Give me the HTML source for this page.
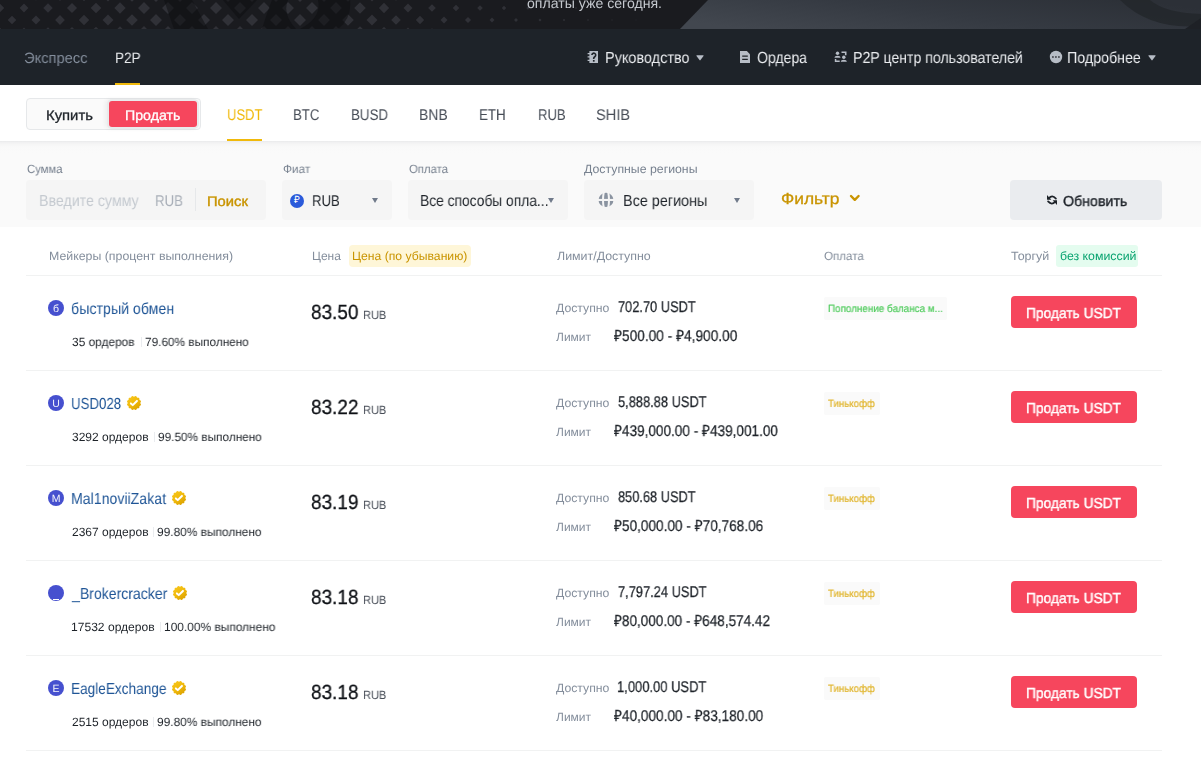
<!DOCTYPE html>
<html><head><meta charset="utf-8">
<style>
html,body{margin:0;padding:0;}
body{width:1201px;height:763px;overflow:hidden;position:relative;background:#fff;font-family:"Liberation Sans",sans-serif;text-rendering:geometricPrecision;}
.t{position:absolute;white-space:nowrap;transform-origin:0 50%;will-change:transform;}
.abs{position:absolute;}
#banner{position:absolute;left:0;top:0;width:1201px;height:29px;background:#1A1B1F;overflow:hidden;}
#nav{position:absolute;left:0;top:29px;width:1201px;height:56px;background:#1E2329;}
.ul{position:absolute;height:2px;background:#F0B90B;}
#filt{position:absolute;left:0;top:141px;width:1201px;height:86px;background:linear-gradient(#E9EAEB 0px,#F1F1F2 1.5px,#F6F6F6 3.5px,#F9F9F9 6px,#FAFAFA 12px,#FAFAFA 100%);}
.box{position:absolute;background:#F5F5F5;border-radius:4px;height:40px;top:180px;}
.caret{position:absolute;width:0;height:0;border-left:3.5px solid transparent;border-right:3.5px solid transparent;border-top:5px solid #707A8A;}
.av{position:absolute;left:48px;width:16px;height:16px;border-radius:50%;background:#4650CF;color:#F4F5FB;font-size:10.5px;line-height:19px;text-align:center;will-change:transform;}
.avu{position:absolute;left:53px;width:6px;height:1px;background:#fff;}
.badge{position:absolute;}
.odiv{position:absolute;width:1px;height:10px;background:#EAECEF;}
.tag{position:absolute;left:824px;height:23px;background:#FAFAFA;border-radius:2px;}
.sell{position:absolute;left:1011px;width:126px;height:32px;background:#F6465D;border-radius:4px;}
.rline{position:absolute;left:26px;width:1136px;height:1px;background:#F1F2F2;}
</style></head><body>
<svg width="0" height="0" style="position:absolute">
<defs>
<symbol id="vb" viewBox="0 0 24 24">
<linearGradient id="bgr" x1="0.2" y1="0.1" x2="0.8" y2="0.9"><stop offset="0" stop-color="#F6C419"/><stop offset="0.5" stop-color="#F0B90B"/><stop offset="1" stop-color="#DDA300"/></linearGradient>
<path fill="url(#bgr)" d="M12.00 2.55L12.50 2.43L13.04 2.14L13.62 1.79L14.22 1.56L14.80 1.57L15.30 1.85L15.70 2.35L16.03 2.94L16.35 3.47L16.72 3.82L17.22 3.97L17.83 3.98L18.50 3.97L19.14 4.07L19.64 4.36L19.93 4.86L20.03 5.50L20.02 6.17L20.03 6.78L20.18 7.27L20.53 7.65L21.06 7.97L21.65 8.30L22.15 8.70L22.43 9.20L22.44 9.78L22.21 10.38L21.86 10.96L21.57 11.50L21.45 12.00L21.57 12.50L21.86 13.04L22.21 13.62L22.44 14.22L22.43 14.80L22.15 15.30L21.65 15.70L21.06 16.03L20.53 16.35L20.18 16.72L20.03 17.22L20.02 17.83L20.03 18.50L19.93 19.14L19.64 19.64L19.14 19.93L18.50 20.03L17.83 20.02L17.22 20.03L16.72 20.18L16.35 20.53L16.03 21.06L15.70 21.65L15.30 22.15L14.80 22.43L14.22 22.44L13.62 22.21L13.04 21.86L12.50 21.57L12.00 21.45L11.50 21.57L10.96 21.86L10.38 22.21L9.78 22.44L9.20 22.43L8.70 22.15L8.30 21.65L7.97 21.06L7.65 20.53L7.27 20.18L6.78 20.03L6.17 20.02L5.50 20.03L4.86 19.93L4.36 19.64L4.07 19.14L3.97 18.50L3.98 17.83L3.97 17.22L3.82 16.73L3.47 16.35L2.94 16.03L2.35 15.70L1.85 15.30L1.57 14.80L1.56 14.22L1.79 13.62L2.14 13.04L2.43 12.50L2.55 12.00L2.43 11.50L2.14 10.96L1.79 10.38L1.56 9.78L1.57 9.20L1.85 8.70L2.35 8.30L2.94 7.97L3.47 7.65L3.82 7.27L3.97 6.78L3.98 6.17L3.97 5.50L4.07 4.86L4.36 4.36L4.86 4.07L5.50 3.97L6.17 3.98L6.78 3.97L7.27 3.82L7.65 3.47L7.97 2.94L8.30 2.35L8.70 1.85L9.20 1.57L9.78 1.56L10.38 1.79L10.96 2.14L11.50 2.43z"/>
<path fill="none" stroke="#fff" stroke-width="3" stroke-linecap="round" stroke-linejoin="round" d="M7.3 12.6L10.1 15.2L16.4 8.9"/>
</symbol>
</defs></svg>

<div id="banner">
<svg width="1201" height="29" style="position:absolute;left:0;top:0">
<defs>
<linearGradient id="bg2" x1="0" y1="0.7" x2="1" y2="0.3"><stop offset="0" stop-color="#42474F"/><stop offset="0.5" stop-color="#353A42"/><stop offset="1" stop-color="#2C3037"/></linearGradient>
</defs>
<path d="M7.70 -4L12 -8.30L16.30 -4L12 0.30zM31.44 -4L36 -8.56L40.56 -4L36 0.56zM55.12 -4L60 -8.88L64.88 -4L60 0.88zM78.80 -4L84 -9.20L89.20 -4L84 1.20zM102.48 -4L108 -9.52L113.52 -4L108 1.52zM126.16 -4L132 -9.84L137.84 -4L132 1.84zM150.00 -4L156 -10.00L162.00 -4L156 2.00zM174.00 -4L180 -10.00L186.00 -4L180 2.00zM198.00 -4L204 -10.00L210.00 -4L204 2.00zM222.00 -4L228 -10.00L234.00 -4L228 2.00zM246.00 -4L252 -10.00L258.00 -4L252 2.00zM270.00 -4L276 -10.00L282.00 -4L276 2.00zM294.00 -4L300 -10.00L306.00 -4L300 2.00zM318.08 -4L324 -9.92L329.92 -4L324 1.92zM342.16 -4L348 -9.84L353.84 -4L348 1.84zM366.53 -4L372 -9.47L377.47 -4L372 1.47zM391.19 -4L396 -8.81L400.81 -4L396 0.81zM415.84 -4L420 -8.16L424.16 -4L420 0.16zM440.50 -4L444 -7.50L447.50 -4L444 -0.50zM464.97 -4L468 -7.03L471.03 -4L468 -0.97zM489.50 -4L492 -6.50L494.50 -4L492 -1.50zM514.03 -4L516 -5.97L517.97 -4L516 -2.03zM538.50 -4L540 -5.50L541.50 -4L540 -2.50zM562.80 -4L564 -5.20L565.20 -4L564 -2.80zM587.10 -4L588 -4.90L588.90 -4L588 -3.10zM611.30 -4L612 -4.70L612.70 -4L612 -3.30zM635.50 -4L636 -4.50L636.50 -4L636 -3.50zM-4.20 8L0 3.80L4.20 8L0 12.20zM19.60 8L24 3.60L28.40 8L24 12.40zM43.28 8L48 3.28L52.72 8L48 12.72zM66.96 8L72 2.96L77.04 8L72 13.04zM90.64 8L96 2.64L101.36 8L96 13.36zM114.32 8L120 2.32L125.68 8L120 13.68zM138.00 8L144 2.00L150.00 8L144 14.00zM162.00 8L168 2.00L174.00 8L168 14.00zM186.00 8L192 2.00L198.00 8L192 14.00zM210.00 8L216 2.00L222.00 8L216 14.00zM234.00 8L240 2.00L246.00 8L240 14.00zM258.00 8L264 2.00L270.00 8L264 14.00zM282.00 8L288 2.00L294.00 8L288 14.00zM306.04 8L312 2.04L317.96 8L312 13.96zM330.12 8L336 2.12L341.88 8L336 13.88zM354.20 8L360 2.20L365.80 8L360 13.80zM378.86 8L384 2.86L389.14 8L384 13.14zM403.51 8L408 3.51L412.49 8L408 12.49zM428.17 8L432 4.17L435.83 8L432 11.83zM452.73 8L456 4.73L459.27 8L456 11.27zM477.20 8L480 5.20L482.80 8L480 10.80zM501.80 8L504 5.80L506.20 8L504 10.20zM526.27 8L528 6.27L529.73 8L528 9.73zM550.65 8L552 6.65L553.35 8L552 9.35zM574.95 8L576 6.95L577.05 8L576 9.05zM599.20 8L600 7.20L600.80 8L600 8.80zM623.40 8L624 7.40L624.60 8L624 8.60zM647.61 8L648 7.61L648.39 8L648 8.39zM7.70 20L12 15.70L16.30 20L12 24.30zM31.44 20L36 15.44L40.56 20L36 24.56zM55.12 20L60 15.12L64.88 20L60 24.88zM78.80 20L84 14.80L89.20 20L84 25.20zM102.48 20L108 14.48L113.52 20L108 25.52zM126.16 20L132 14.16L137.84 20L132 25.84zM150.00 20L156 14.00L162.00 20L156 26.00zM174.00 20L180 14.00L186.00 20L180 26.00zM198.00 20L204 14.00L210.00 20L204 26.00zM222.00 20L228 14.00L234.00 20L228 26.00zM246.00 20L252 14.00L258.00 20L252 26.00zM270.00 20L276 14.00L282.00 20L276 26.00zM294.00 20L300 14.00L306.00 20L300 26.00zM318.08 20L324 14.08L329.92 20L324 25.92zM342.16 20L348 14.16L353.84 20L348 25.84zM366.53 20L372 14.53L377.47 20L372 25.47zM391.19 20L396 15.19L400.81 20L396 24.81zM415.84 20L420 15.84L424.16 20L420 24.16zM440.50 20L444 16.50L447.50 20L444 23.50zM464.97 20L468 16.97L471.03 20L468 23.03zM489.50 20L492 17.50L494.50 20L492 22.50zM514.03 20L516 18.03L517.97 20L516 21.97zM538.50 20L540 18.50L541.50 20L540 21.50zM562.80 20L564 18.80L565.20 20L564 21.20zM587.10 20L588 19.10L588.90 20L588 20.90zM611.30 20L612 19.30L612.70 20L612 20.70zM635.50 20L636 19.50L636.50 20L636 20.50zM-4.20 32L0 27.80L4.20 32L0 36.20zM19.60 32L24 27.60L28.40 32L24 36.40zM43.28 32L48 27.28L52.72 32L48 36.72zM66.96 32L72 26.96L77.04 32L72 37.04zM90.64 32L96 26.64L101.36 32L96 37.36zM114.32 32L120 26.32L125.68 32L120 37.68zM138.00 32L144 26.00L150.00 32L144 38.00zM162.00 32L168 26.00L174.00 32L168 38.00zM186.00 32L192 26.00L198.00 32L192 38.00zM210.00 32L216 26.00L222.00 32L216 38.00zM234.00 32L240 26.00L246.00 32L240 38.00zM258.00 32L264 26.00L270.00 32L264 38.00zM282.00 32L288 26.00L294.00 32L288 38.00zM306.04 32L312 26.04L317.96 32L312 37.96zM330.12 32L336 26.12L341.88 32L336 37.88zM354.20 32L360 26.20L365.80 32L360 37.80zM378.86 32L384 26.86L389.14 32L384 37.14zM403.51 32L408 27.51L412.49 32L408 36.49zM428.17 32L432 28.17L435.83 32L432 35.83zM452.73 32L456 28.73L459.27 32L456 35.27zM477.20 32L480 29.20L482.80 32L480 34.80zM501.80 32L504 29.80L506.20 32L504 34.20zM526.27 32L528 30.27L529.73 32L528 33.73zM550.65 32L552 30.65L553.35 32L552 33.35zM574.95 32L576 30.95L577.05 32L576 33.05zM599.20 32L600 31.20L600.80 32L600 32.80zM623.40 32L624 31.40L624.60 32L624 32.60zM647.61 32L648 31.61L648.39 32L648 32.39z" fill="#303137"/>
<g fill="#0E0F12" opacity="0.55">
<path d="M164 0H192L208 29H174z"/>
<path d="M223 0H257L239 19z"/>
<path d="M272 0H350Q352 18 338 29H300Q322 18 318 0H288Q282 14 296 29H262Q268 10 272 0z"/>
</g>
<path d="M708 0 L1201 0 L1201 29 L680 29 Z" fill="url(#bg2)"/>
<path d="M1120 0Q1150 30 1201 26V14Q1165 13 1150 0z" fill="#22252A" opacity="0.75"/>
<path d="M1185 29L1201 18V29z" fill="#1E2126"/>
</svg>
</div>
<div id="nav"></div>
<div class="ul" style="left:115px;top:83px;width:25px;"></div>
<!-- nav icons -->
<svg class="abs" style="left:587px;top:50px" width="12" height="14" viewBox="0 0 12 14">
<path fill="#B7BDC6" d="M2.4 1h8.6v12H2.4z M.6 2.9h2v1.4h-2z M.6 6.2h2v1.4h-2z M.6 9.7h2v1.4h-2z"/>
<path fill="none" stroke="#1E2329" stroke-width="1.6" d="M4.9 5.1a1.9 1.9 0 1 1 2.9 1.6c-.8.5-1.1.9-1.1 1.8v.5"/>
<rect x="5.9" y="10" width="1.7" height="1.7" fill="#1E2329"/>
</svg>
<svg class="abs" style="left:739px;top:50px" width="12" height="14" viewBox="0 0 12 14">
<path fill="#B7BDC6" d="M1 1h6.8L11 4.2V13H1z"/>
<path fill="#1E2329" d="M3.2 5.5h5.6v1.3H3.2zM3.2 8.8h5.6v1.3H3.2z"/>
</svg>
<svg class="abs" style="left:834px;top:50px" width="14" height="14" viewBox="0 0 14 14">
<g fill="#B7BDC6">
<circle cx="3.5" cy="3.2" r="1.7"/><path d="M0.5 7.7c0-1.3 1.2-2 3-2s3 .7 3 2z"/>
<path d="M7.5 1.6h5v3.6h-1.6V3.1H7.5z"/>
<circle cx="9.8" cy="7.3" r="1.7"/><path d="M6.8 11.8c0-1.3 1.2-2 3-2s3 .7 3 2z"/>
<path d="M0.8 8.9h1.5v1.5h3.4v1.5H0.8z"/>
</g></svg>
<svg class="abs" style="left:1049px;top:50px" width="14" height="14" viewBox="0 0 14 14">
<circle cx="7" cy="7" r="6.2" fill="#B7BDC6"/>
<rect x="3.05" y="6.1" width="1.7" height="1.8" fill="#4A4E55"/><rect x="6.05" y="6.1" width="1.7" height="1.8" fill="#4A4E55"/><rect x="9.05" y="6.1" width="1.7" height="1.8" fill="#4A4E55"/>
</svg>
<svg class="abs" style="left:696px;top:54.8px" width="8" height="6" viewBox="0 0 8 6"><path d="M0.9 0.2H7.1Q7.9 0.2 7.5 0.9L4.5 5.1Q4 5.7 3.5 5.1L0.5 0.9Q0.1 0.2 0.9 0.2z" fill="#B7BDC6"/></svg>
<svg class="abs" style="left:1148.2px;top:54.8px" width="8" height="6" viewBox="0 0 8 6"><path d="M0.9 0.2H7.1Q7.9 0.2 7.5 0.9L4.5 5.1Q4 5.7 3.5 5.1L0.5 0.9Q0.1 0.2 0.9 0.2z" fill="#B7BDC6"/></svg>

<!-- toggle -->
<div class="abs" style="left:26px;top:98px;width:173px;height:30px;border:1px solid #E6E8EA;border-radius:4px;background:#FAFAFA;"></div>
<div class="abs" style="left:109px;top:101px;width:88px;height:26px;background:#F6465D;border-radius:3px;box-shadow:0 0 0 2px #E9EBEC,-2px 0 4px 2px rgba(0,0,0,0.05);"></div>
<div class="ul" style="left:227px;top:139px;width:35px;"></div>

<div id="filt"></div>
<div class="box" style="left:26px;width:240px;"></div>
<div class="abs" style="left:195px;top:188px;width:1px;height:23px;background:#E6E8EA;"></div>
<div class="box" style="left:282px;width:110px;"></div>
<div class="abs" style="left:290px;top:193.5px;width:14px;height:14px;border-radius:50%;background:#2A5ADA;"></div>
<div class="abs" style="left:290px;top:193.5px;width:14px;height:14px;color:#fff;font-size:10px;line-height:14px;text-align:center;">₽</div>
<div class="caret" style="left:371.5px;top:197.6px;"></div>
<div class="box" style="left:408px;width:160px;"></div>
<div class="caret" style="left:548px;top:197.6px;"></div>
<div class="box" style="left:584px;width:170px;"></div>
<svg class="abs" style="left:598px;top:192px" width="16" height="16" viewBox="0 0 16 16">
<ellipse cx="8" cy="7.9" rx="7.5" ry="7.1" fill="#8A93A0"/>
<path d="M0 7.95h16" stroke="#F5F5F5" stroke-width="2.1"/>
<path d="M5.8 0Q4.2 8 5.8 16M10.2 0Q11.8 8 10.2 16" stroke="#F5F5F5" stroke-width="2" fill="none"/>
</svg>
<div class="caret" style="left:733.5px;top:197.6px;"></div>
<svg class="abs" style="left:848px;top:192px" width="14" height="12" viewBox="0 0 14 12">
<path d="M3 4L6.8 7.8L10.6 4" stroke="#C99400" stroke-width="2.4" stroke-linecap="round" stroke-linejoin="round" fill="none"/>
</svg>
<div class="abs" style="left:1010px;top:180px;width:152px;height:40px;background:#EAECEF;border-radius:4px;"></div>
<svg class="abs" style="left:1046px;top:194px" width="12" height="12" viewBox="0 0 12 12">
<path d="M1 1L1 5.7L5.3 5.7z" fill="#1E2329"/>
<path d="M2.8 4.4Q6.2 0.4 9.9 4.6" stroke="#1E2329" stroke-width="1.8" fill="none" stroke-linecap="round"/>
<path d="M11 11L11 6.3L6.7 6.3z" fill="#1E2329"/>
<path d="M9.2 7.6Q5.8 11.6 2.1 7.4" stroke="#1E2329" stroke-width="1.8" fill="none" stroke-linecap="round"/>
</svg>

<!-- header -->
<div class="abs" style="left:349px;top:245px;width:122px;height:22px;background:#FEF6D8;border-radius:4px;"></div>
<div class="abs" style="left:1056px;top:245px;width:82px;height:22px;background:#E4FCEF;border-radius:3px;"></div>
<div class="rline" style="top:275px"></div>

<div class="av" style="top:300px">б</div>
<div class="odiv" style="left:140.5px;top:337px"></div>
<div class="tag" style="top:297px;width:123px"></div>
<div class="sell" style="top:296px"></div>
<div class="rline" style="top:370px"></div>
<div class="av" style="top:395px">U</div>
<svg class="badge" style="left:126px;top:394.8px" width="16" height="16" viewBox="0 0 24 24"><use href="#vb"/></svg>
<div class="odiv" style="left:153.5px;top:432px"></div>
<div class="tag" style="top:392px;width:56px"></div>
<div class="sell" style="top:391px"></div>
<div class="rline" style="top:465px"></div>
<div class="av" style="top:490px">M</div>
<svg class="badge" style="left:171px;top:489.8px" width="16" height="16" viewBox="0 0 24 24"><use href="#vb"/></svg>
<div class="odiv" style="left:153.2px;top:527px"></div>
<div class="tag" style="top:487px;width:56px"></div>
<div class="sell" style="top:486px"></div>
<div class="rline" style="top:560px"></div>
<div class="av" style="top:585px"></div>
<div class="avu" style="top:599px"></div>
<svg class="badge" style="left:172.2px;top:584.8px" width="16" height="16" viewBox="0 0 24 24"><use href="#vb"/></svg>
<div class="odiv" style="left:159.5px;top:622px"></div>
<div class="tag" style="top:582px;width:56px"></div>
<div class="sell" style="top:581px"></div>
<div class="rline" style="top:655px"></div>
<div class="av" style="top:680px">E</div>
<svg class="badge" style="left:171px;top:679.8px" width="16" height="16" viewBox="0 0 24 24"><use href="#vb"/></svg>
<div class="odiv" style="left:153.2px;top:717px"></div>
<div class="tag" style="top:677px;width:56px"></div>
<div class="sell" style="top:676px"></div>
<div class="rline" style="top:750px"></div>
<div class="t" style="left:527.00px;top:-4.00px;font-size:14px;line-height:14px;color:#C4C8CE;transform:scaleX(1.0075);">оплаты уже сегодня.</div>
<div class="t" style="left:24.32px;top:51.00px;font-size:15px;line-height:15px;color:#848E9C;transform:scaleX(0.9794);">Экспресс</div>
<div class="t" style="left:114.59px;top:51.00px;font-size:15px;line-height:15px;color:#EAECEF;transform:scaleX(0.9074);">P2P</div>
<div class="t" style="left:604.50px;top:51.00px;font-size:16px;line-height:16px;color:#EAECEF;transform:scaleX(0.9043);">Руководство</div>
<div class="t" style="left:756.52px;top:51.00px;font-size:16px;line-height:16px;color:#EAECEF;transform:scaleX(0.8786);">Ордера</div>
<div class="t" style="left:853.12px;top:51.00px;font-size:16px;line-height:16px;color:#EAECEF;transform:scaleX(0.8832);">P2P центр пользователей</div>
<div class="t" style="left:1067.11px;top:51.00px;font-size:16px;line-height:16px;color:#EAECEF;transform:scaleX(0.8889);">Подробнее</div>
<div class="t" style="left:46.14px;top:108.00px;font-size:14px;line-height:14px;color:#1E2329;-webkit-text-stroke:0.3px #1E2329;transform:scaleX(1.0605);">Купить</div>
<div class="t" style="left:125.29px;top:108.00px;font-size:14px;line-height:14px;color:#FFFFFF;-webkit-text-stroke:0.3px #FFFFFF;transform:scaleX(1.0130);">Продать</div>
<div class="t" style="left:226.56px;top:108.00px;font-size:15.5px;line-height:15.5px;color:#F0B90B;transform:scaleX(0.8390);">USDT</div>
<div class="t" style="left:293.45px;top:108.00px;font-size:15.5px;line-height:15.5px;color:#474D57;transform:scaleX(0.8517);">BTC</div>
<div class="t" style="left:350.74px;top:108.00px;font-size:15.5px;line-height:15.5px;color:#474D57;transform:scaleX(0.8634);">BUSD</div>
<div class="t" style="left:419.30px;top:108.00px;font-size:15.5px;line-height:15.5px;color:#474D57;transform:scaleX(0.9033);">BNB</div>
<div class="t" style="left:479.24px;top:108.00px;font-size:15.5px;line-height:15.5px;color:#474D57;transform:scaleX(0.8621);">ETH</div>
<div class="t" style="left:537.56px;top:108.00px;font-size:15.5px;line-height:15.5px;color:#474D57;transform:scaleX(0.8419);">RUB</div>
<div class="t" style="left:596.36px;top:108.00px;font-size:15.5px;line-height:15.5px;color:#474D57;transform:scaleX(0.9441);">SHIB</div>
<div class="t" style="left:26.50px;top:163.00px;font-size:12px;line-height:12px;color:#77818F;transform:scaleX(0.9421);">Сумма</div>
<div class="t" style="left:282.50px;top:163.00px;font-size:12px;line-height:12px;color:#77818F;transform:scaleX(0.9821);">Фиат</div>
<div class="t" style="left:408.70px;top:163.00px;font-size:12px;line-height:12px;color:#77818F;transform:scaleX(0.9463);">Оплата</div>
<div class="t" style="left:584.20px;top:163.00px;font-size:12px;line-height:12px;color:#77818F;transform:scaleX(1.0255);">Доступные регионы</div>
<div class="t" style="left:38.61px;top:194.00px;font-size:16px;line-height:16px;color:#C5CAD0;transform:scaleX(0.8874);">Введите сумму</div>
<div class="t" style="left:155.15px;top:194.00px;font-size:15.5px;line-height:15.5px;color:#AAB0B9;transform:scaleX(0.8516);">RUB</div>
<div class="t" style="left:207.35px;top:194.00px;font-size:14px;line-height:14px;color:#C99400;-webkit-text-stroke:0.4px #C99400;transform:scaleX(1.0526);">Поиск</div>
<div class="t" style="left:311.65px;top:194.00px;font-size:15.5px;line-height:15.5px;color:#1E2329;transform:scaleX(0.8452);">RUB</div>
<div class="t" style="left:419.84px;top:194.00px;font-size:16px;line-height:16px;color:#1E2329;transform:scaleX(0.8626);">Все способы опла...</div>
<div class="t" style="left:623.10px;top:194.00px;font-size:16px;line-height:16px;color:#1E2329;transform:scaleX(0.8989);">Все регионы</div>
<div class="t" style="left:781.41px;top:192.00px;font-size:16px;line-height:16px;color:#C99400;-webkit-text-stroke:0.3px #C99400;transform:scaleX(1.0865);">Фильтр</div>
<div class="t" style="left:1063.00px;top:195.00px;font-size:14.5px;line-height:14.5px;color:#1E2329;-webkit-text-stroke:0.4px #1E2329;transform:scaleX(0.9800);">Обновить</div>
<div class="t" style="left:49.47px;top:250.00px;font-size:12px;line-height:12px;color:#848E9C;transform:scaleX(1.0282);">Мейкеры (процент выполнения)</div>
<div class="t" style="left:311.71px;top:250.00px;font-size:12px;line-height:12px;color:#848E9C;transform:scaleX(0.9929);">Цена</div>
<div class="t" style="left:351.98px;top:250.00px;font-size:12px;line-height:12px;color:#C99400;transform:scaleX(1.0161);">Цена (по убыванию)</div>
<div class="t" style="left:557.00px;top:250.00px;font-size:12px;line-height:12px;color:#848E9C;transform:scaleX(1.0333);">Лимит/Доступно</div>
<div class="t" style="left:824.40px;top:250.00px;font-size:12px;line-height:12px;color:#848E9C;transform:scaleX(0.9659);">Оплата</div>
<div class="t" style="left:1011.00px;top:250.00px;font-size:12px;line-height:12px;color:#848E9C;transform:scaleX(1.0389);">Торгуй</div>
<div class="t" style="left:1060.00px;top:250.00px;font-size:12px;line-height:12px;color:#08A36F;transform:scaleX(1.0270);">без комиссий</div>
<div class="t" style="left:71.41px;top:302.00px;font-size:16px;line-height:16px;color:#1F5596;transform:scaleX(0.8870);">быстрый обмен</div>
<div class="t" style="left:72.30px;top:336.00px;font-size:12px;line-height:12px;color:#1E2329;transform:scaleX(0.9905);">35 ордеров</div>
<div class="t" style="left:144.70px;top:336.00px;font-size:12px;line-height:12px;color:#1E2329;transform:scaleX(0.9838);">79.60% выполнено</div>
<div class="t" style="left:310.78px;top:302.60px;font-size:20.5px;line-height:20.5px;color:#0E1116;-webkit-text-stroke:0.3px #0E1116;transform:scaleX(0.9240);">83.50</div>
<div class="t" style="left:362.78px;top:309.00px;font-size:12px;line-height:12px;color:#474D57;transform:scaleX(0.9208);">RUB</div>
<div class="t" style="left:555.80px;top:302.00px;font-size:12px;line-height:12px;color:#848E9C;transform:scaleX(1.0192);">Доступно</div>
<div class="t" style="left:618.30px;top:300.00px;font-size:15.5px;line-height:15.5px;color:#1E2329;-webkit-text-stroke:0.25px #1E2329;transform:scaleX(0.8266);">702.70 USDT</div>
<div class="t" style="left:555.80px;top:331.00px;font-size:12px;line-height:12px;color:#848E9C;">Лимит</div>
<div class="t" style="left:614.20px;top:328.70px;font-size:15.5px;line-height:15.5px;color:#1E2329;-webkit-text-stroke:0.25px #1E2329;transform:scaleX(0.8835);">₽500.00 - ₽4,900.00</div>
<div class="t" style="left:828.00px;top:304.00px;font-size:10.5px;line-height:10.5px;color:#52CC5F;-webkit-text-stroke:0.2px #52CC5F;transform:scaleX(0.9393);">Пополнение баланса м...</div>
<div class="t" style="left:1025.75px;top:307.00px;font-size:14.5px;line-height:14.5px;color:#FFFFFF;-webkit-text-stroke:0.4px #FFFFFF;transform:scaleX(0.9485);">Продать USDT</div>
<div class="t" style="left:71.47px;top:397.00px;font-size:16px;line-height:16px;color:#1F5596;transform:scaleX(0.8288);">USD028</div>
<div class="t" style="left:72.30px;top:431.00px;font-size:12px;line-height:12px;color:#1E2329;">3292 ордеров</div>
<div class="t" style="left:158.00px;top:431.00px;font-size:12px;line-height:12px;color:#1E2329;transform:scaleX(0.9838);">99.50% выполнено</div>
<div class="t" style="left:310.78px;top:397.60px;font-size:20.5px;line-height:20.5px;color:#0E1116;-webkit-text-stroke:0.3px #0E1116;transform:scaleX(0.9240);">83.22</div>
<div class="t" style="left:362.78px;top:404.00px;font-size:12px;line-height:12px;color:#474D57;transform:scaleX(0.9208);">RUB</div>
<div class="t" style="left:555.80px;top:397.00px;font-size:12px;line-height:12px;color:#848E9C;transform:scaleX(1.0192);">Доступно</div>
<div class="t" style="left:618.30px;top:395.00px;font-size:15.5px;line-height:15.5px;color:#1E2329;-webkit-text-stroke:0.25px #1E2329;transform:scaleX(0.8290);">5,888.88 USDT</div>
<div class="t" style="left:555.80px;top:426.00px;font-size:12px;line-height:12px;color:#848E9C;">Лимит</div>
<div class="t" style="left:614.20px;top:423.70px;font-size:15.5px;line-height:15.5px;color:#1E2329;-webkit-text-stroke:0.25px #1E2329;transform:scaleX(0.8770);">₽439,000.00 - ₽439,001.00</div>
<div class="t" style="left:828.00px;top:399.00px;font-size:10.5px;line-height:10.5px;color:#E0B42A;-webkit-text-stroke:0.2px #E0B42A;transform:scaleX(0.9216);">Тинькофф</div>
<div class="t" style="left:1025.75px;top:402.00px;font-size:14.5px;line-height:14.5px;color:#FFFFFF;-webkit-text-stroke:0.4px #FFFFFF;transform:scaleX(0.9485);">Продать USDT</div>
<div class="t" style="left:71.42px;top:492.00px;font-size:16px;line-height:16px;color:#1F5596;transform:scaleX(0.8832);">Mal1noviiZakat</div>
<div class="t" style="left:72.30px;top:526.00px;font-size:12px;line-height:12px;color:#1E2329;">2367 ордеров</div>
<div class="t" style="left:157.40px;top:526.00px;font-size:12px;line-height:12px;color:#1E2329;transform:scaleX(0.9914);">99.80% выполнено</div>
<div class="t" style="left:310.78px;top:492.60px;font-size:20.5px;line-height:20.5px;color:#0E1116;-webkit-text-stroke:0.3px #0E1116;transform:scaleX(0.9240);">83.19</div>
<div class="t" style="left:362.78px;top:499.00px;font-size:12px;line-height:12px;color:#474D57;transform:scaleX(0.9208);">RUB</div>
<div class="t" style="left:555.80px;top:492.00px;font-size:12px;line-height:12px;color:#848E9C;transform:scaleX(1.0192);">Доступно</div>
<div class="t" style="left:618.30px;top:490.00px;font-size:15.5px;line-height:15.5px;color:#1E2329;-webkit-text-stroke:0.25px #1E2329;transform:scaleX(0.8255);">850.68 USDT</div>
<div class="t" style="left:555.80px;top:521.00px;font-size:12px;line-height:12px;color:#848E9C;">Лимит</div>
<div class="t" style="left:614.20px;top:518.70px;font-size:15.5px;line-height:15.5px;color:#1E2329;-webkit-text-stroke:0.25px #1E2329;transform:scaleX(0.8793);">₽50,000.00 - ₽70,768.06</div>
<div class="t" style="left:828.00px;top:494.00px;font-size:10.5px;line-height:10.5px;color:#E0B42A;-webkit-text-stroke:0.2px #E0B42A;transform:scaleX(0.9216);">Тинькофф</div>
<div class="t" style="left:1025.75px;top:497.00px;font-size:14.5px;line-height:14.5px;color:#FFFFFF;-webkit-text-stroke:0.4px #FFFFFF;transform:scaleX(0.9485);">Продать USDT</div>
<div class="t" style="left:72.30px;top:587.00px;font-size:16px;line-height:16px;color:#1F5596;transform:scaleX(0.8789);">_Brokercracker</div>
<div class="t" style="left:71.29px;top:621.00px;font-size:12px;line-height:12px;color:#1E2329;transform:scaleX(1.0061);">17532 ордеров</div>
<div class="t" style="left:163.51px;top:621.00px;font-size:12px;line-height:12px;color:#1E2329;transform:scaleX(0.9937);">100.00% выполнено</div>
<div class="t" style="left:310.78px;top:587.60px;font-size:20.5px;line-height:20.5px;color:#0E1116;-webkit-text-stroke:0.3px #0E1116;transform:scaleX(0.9240);">83.18</div>
<div class="t" style="left:362.78px;top:594.00px;font-size:12px;line-height:12px;color:#474D57;transform:scaleX(0.9208);">RUB</div>
<div class="t" style="left:555.80px;top:587.00px;font-size:12px;line-height:12px;color:#848E9C;transform:scaleX(1.0192);">Доступно</div>
<div class="t" style="left:618.30px;top:585.00px;font-size:15.5px;line-height:15.5px;color:#1E2329;-webkit-text-stroke:0.25px #1E2329;transform:scaleX(0.8290);">7,797.24 USDT</div>
<div class="t" style="left:555.80px;top:616.00px;font-size:12px;line-height:12px;color:#848E9C;">Лимит</div>
<div class="t" style="left:614.20px;top:613.70px;font-size:15.5px;line-height:15.5px;color:#1E2329;-webkit-text-stroke:0.25px #1E2329;transform:scaleX(0.8747);">₽80,000.00 - ₽648,574.42</div>
<div class="t" style="left:828.00px;top:589.00px;font-size:10.5px;line-height:10.5px;color:#E0B42A;-webkit-text-stroke:0.2px #E0B42A;transform:scaleX(0.9216);">Тинькофф</div>
<div class="t" style="left:1025.75px;top:592.00px;font-size:14.5px;line-height:14.5px;color:#FFFFFF;-webkit-text-stroke:0.4px #FFFFFF;transform:scaleX(0.9485);">Продать USDT</div>
<div class="t" style="left:71.45px;top:682.00px;font-size:16px;line-height:16px;color:#1F5596;transform:scaleX(0.8514);">EagleExchange</div>
<div class="t" style="left:72.30px;top:716.00px;font-size:12px;line-height:12px;color:#1E2329;">2515 ордеров</div>
<div class="t" style="left:157.40px;top:716.00px;font-size:12px;line-height:12px;color:#1E2329;transform:scaleX(0.9914);">99.80% выполнено</div>
<div class="t" style="left:310.78px;top:682.60px;font-size:20.5px;line-height:20.5px;color:#0E1116;-webkit-text-stroke:0.3px #0E1116;transform:scaleX(0.9240);">83.18</div>
<div class="t" style="left:362.78px;top:689.00px;font-size:12px;line-height:12px;color:#474D57;transform:scaleX(0.9208);">RUB</div>
<div class="t" style="left:555.80px;top:682.00px;font-size:12px;line-height:12px;color:#848E9C;transform:scaleX(1.0192);">Доступно</div>
<div class="t" style="left:617.46px;top:680.00px;font-size:15.5px;line-height:15.5px;color:#1E2329;-webkit-text-stroke:0.25px #1E2329;transform:scaleX(0.8368);">1,000.00 USDT</div>
<div class="t" style="left:555.80px;top:711.00px;font-size:12px;line-height:12px;color:#848E9C;">Лимит</div>
<div class="t" style="left:614.20px;top:708.70px;font-size:15.5px;line-height:15.5px;color:#1E2329;-webkit-text-stroke:0.25px #1E2329;transform:scaleX(0.8793);">₽40,000.00 - ₽83,180.00</div>
<div class="t" style="left:828.00px;top:684.00px;font-size:10.5px;line-height:10.5px;color:#E0B42A;-webkit-text-stroke:0.2px #E0B42A;transform:scaleX(0.9216);">Тинькофф</div>
<div class="t" style="left:1025.75px;top:687.00px;font-size:14.5px;line-height:14.5px;color:#FFFFFF;-webkit-text-stroke:0.4px #FFFFFF;transform:scaleX(0.9485);">Продать USDT</div>
</body></html>
